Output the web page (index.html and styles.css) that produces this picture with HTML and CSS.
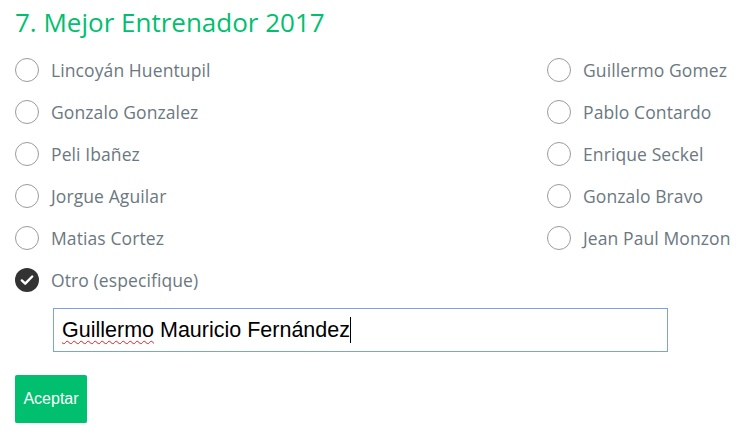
FILE: index.html
```html
<!DOCTYPE html>
<html lang="es">
<head>
<meta charset="utf-8">
<link rel="stylesheet" href="styles.css">
</head>
<body>
<div class="question">
  <h2 class="title">7. Mejor Entrenador 2017</h2>
  <div class="options">
    <div class="opt"><span class="radio"></span><span class="label">Lincoyán Huentupil</span></div>
    <div class="opt"><span class="radio"></span><span class="label">Guillermo Gomez</span></div>
    <div class="opt"><span class="radio"></span><span class="label">Gonzalo Gonzalez</span></div>
    <div class="opt"><span class="radio"></span><span class="label">Pablo Contardo</span></div>
    <div class="opt"><span class="radio"></span><span class="label">Peli Ibañez</span></div>
    <div class="opt"><span class="radio"></span><span class="label">Enrique Seckel</span></div>
    <div class="opt"><span class="radio"></span><span class="label">Jorgue Aguilar</span></div>
    <div class="opt"><span class="radio"></span><span class="label">Gonzalo Bravo</span></div>
    <div class="opt"><span class="radio"></span><span class="label">Matias Cortez</span></div>
    <div class="opt"><span class="radio"></span><span class="label">Jean Paul Monzon</span></div>
    <div class="opt"><span class="radio checked"><svg viewBox="0 0 24 24" width="24" height="24"><circle cx="12" cy="12" r="12" fill="#333"/><path d="M6.8 12.4l3.4 3.3 7-7.2" fill="none" stroke="#fff" stroke-width="2.4" stroke-linecap="round" stroke-linejoin="round"/></svg></span><span class="label">Otro (especifique)</span></div>
  </div>
  <div class="other">
    <div class="textbox"><span class="misspelled">Guillermo</span> Mauricio Fernández<span class="caret"></span></div>
  </div>
  <button class="btn">Aceptar</button>
</div>
</body>
</html>
```
FILE: styles.css
```css
* { box-sizing: border-box; }
body {
  margin: 0;
  background: #fff;
  font-family: "Open Sans", "Liberation Sans", sans-serif;
}
.question {
  padding: 0 15px;
}
.title {
  margin: 0;
  height: 49px;
  padding-top: 4px;
  font-weight: 400;
  font-size: 26px;
  line-height: 36px;
  color: #00bf6f;
}
.options {
  display: grid;
  grid-template-columns: 532px 1fr;
}
.opt {
  height: 42px;
  display: flex;
  align-items: center;
  gap: 12px;
}
.radio {
  width: 24px;
  height: 24px;
  border: 1px solid #9b9b9b;
  border-radius: 50%;
  flex: none;
}
.radio.checked {
  border: none;
  display: block;
}
.radio svg { display: block; }
.label {
  font-size: 17.5px;
  letter-spacing: 0.1px;
  color: #6b787f;
  line-height: 22px;
}
.other {
  padding: 7px 0 0 38px;
}
.textbox {
  width: 615px;
  height: 44px;
  border: 1px solid #7ba2e3;
  font-family: "Liberation Sans", Arial, sans-serif;
  font-size: 21.5px;
  color: #000;
  padding: 0 8px;
  display: flex;
  align-items: center;
  white-space: pre;
}
.misspelled {
  text-decoration: underline wavy #e02020;
  text-underline-offset: 3px;
  text-decoration-thickness: 1px;
}
.caret {
  display: inline-block;
  width: 1px;
  height: 26px;
  background: #000;
}
.btn {
  margin-top: 23px;
  width: 72px;
  height: 48px;
  border: none;
  border-radius: 2px;
  background: #00bf6f;
  color: #fff;
  font-family: "Liberation Sans", Arial, sans-serif;
  font-size: 16px;
  padding: 0;
  box-shadow: 0 3px 0 #e3e5e6;
}
```
